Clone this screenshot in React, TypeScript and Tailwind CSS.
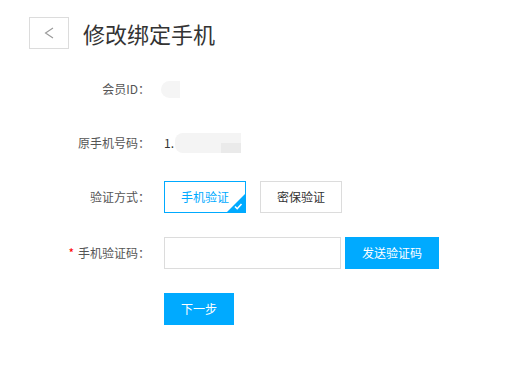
import React from "react";

const font = { fontFamily: '"Noto Sans CJK SC", "Noto Sans", sans-serif' };

function Label({ children, required }: { children: React.ReactNode; required?: boolean }) {
  return (
    <div className="w-[150px] shrink-0 text-right text-[12px] text-[#555]">
      {required && <span className="mr-[4px] text-[#f00]">*</span>}
      {children}
    </div>
  );
}

export default function App() {
  return (
    <div className="w-[506px] h-[367px] bg-white pt-[17px]" style={font}>
      <div className="flex items-center pl-[29px]">
        <button className="flex h-[32px] w-[40px] items-center justify-center border border-[#dcdcdc] bg-white">
          <svg width="10" height="12" viewBox="0 0 10 12" fill="none">
            <path d="M9 1L1.5 6L9 11" stroke="#999" strokeWidth="1.1" />
          </svg>
        </button>
        <div className="ml-[14px] text-[22px] leading-[32px] text-[#333]">修改绑定手机</div>
      </div>

      <div className="mt-[24px] flex flex-col">
        <div className="flex h-[32px] items-center gap-[14px]">
          <Label>会员ID：</Label>
          <div className="ml-[-3px] h-[17px] w-[19px] rounded-l-full bg-[#f5f5f5]" />
        </div>

        <div className="mt-[22px] flex h-[32px] items-center gap-[14px]">
          <Label>原手机号码：</Label>
          <div className="flex items-center text-[12px] text-[#333]">
            <span>1.</span>
            <div className="relative ml-[1px] h-[20px] w-[66px] rounded-l-[8px] bg-[#f4f4f4]">
              <div className="absolute bottom-0 right-0 h-[10px] w-[20px] bg-[#eaeaea]" />
            </div>
          </div>
        </div>

        <div className="mt-[22px] flex h-[32px] items-center gap-[14px]">
          <Label>验证方式：</Label>
          <div className="flex gap-[14px]">
            <div className="relative flex h-[32px] w-[82px] items-center justify-center border border-[#00aaff] text-[12px] text-[#00aaff]">
              手机验证
              <svg className="absolute bottom-0 right-0" width="18" height="18" viewBox="0 0 18 18">
                <polygon points="18,0 18,18 0,18" fill="#00aaff" />
                <path d="M8 12.5l2.2 2.2L14.5 10" stroke="#fff" strokeWidth="1.6" fill="none" />
              </svg>
            </div>
            <div className="flex h-[32px] w-[82px] items-center justify-center border border-[#dcdcdc] text-[12px] text-[#333]">
              密保验证
            </div>
          </div>
        </div>

        <div className="mt-[24px] flex h-[32px] items-center gap-[14px]">
          <Label required>手机验证码：</Label>
          <div className="flex gap-[4px]">
            <input className="h-[32px] w-[177px] border border-[#dcdcdc] px-2 text-[12px] outline-none" />
            <button className="h-[32px] w-[94px] bg-[#00aaff] text-[12px] text-white">发送验证码</button>
          </div>
        </div>

        <div className="mt-[24px] flex h-[32px] items-center gap-[14px]">
          <div className="w-[150px] shrink-0" />
          <button className="h-[32px] w-[70px] bg-[#00aaff] text-[12px] text-white">下一步</button>
        </div>
      </div>
    </div>
  );
}
